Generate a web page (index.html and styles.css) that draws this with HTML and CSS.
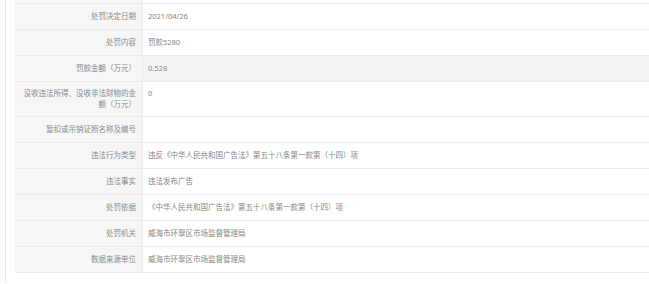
FILE: index.html
```html
<!DOCTYPE html>
<html lang="zh-CN">
<head>
<meta charset="utf-8">
<title>行政处罚信息</title>
<link rel="stylesheet" href="styles.css">
</head>
<body>
<div class="panel">
  <table class="info">
    <tbody>
      <tr class="lead"><th></th><td></td></tr>
      <tr><th>处罚决定日期</th><td>2021/04/26</td></tr>
      <tr><th>处罚内容</th><td>罚款5280</td></tr>
      <tr class="hover"><th>罚款金额（万元）</th><td>0.528</td></tr>
      <tr class="tall"><th>没收违法所得、没收非法财物的金额（万元）</th><td class="top">0</td></tr>
      <tr><th>暂扣或吊销证照名称及编号</th><td></td></tr>
      <tr><th>违法行为类型</th><td>违反《中华人民共和国广告法》第五十八条第一款第（十四）项</td></tr>
      <tr><th>违法事实</th><td>违法发布广告</td></tr>
      <tr><th>处罚依据</th><td>《中华人民共和国广告法》第五十八条第一款第（十四）项</td></tr>
      <tr><th>处罚机关</th><td>威海市环翠区市场监督管理局</td></tr>
      <tr><th>数据来源单位</th><td>威海市环翠区市场监督管理局</td></tr>
    </tbody>
  </table>
</div>
</body>
</html>
```

FILE: styles.css
```css
html, body {
  margin: 0;
  padding: 0;
  background: #ffffff;
  overflow: hidden;
}

body {
  font-family: "Noto Sans", "Noto Sans CJK SC", sans-serif;
  font-size: 7.5px;
  color: #888888;
}

.panel {
  box-sizing: border-box;
  margin: 0 0 0 5px;
  height: 283px;
  padding: 0 0 0 9px;
  border-left: 1px solid #e8e8e8;
  background: #ffffff;
}

.info {
  width: 100%;
  border-collapse: collapse;
  table-layout: fixed;
}

.info th,
.info td {
  border-top: 1px solid #ebebeb;
  border-bottom: 1px solid #ebebeb;
  line-height: 11px;
  padding: 7px 6px 7px 5px;
  vertical-align: middle;
  font-weight: normal;
}

.info th {
  width: 116px;
  padding-right: 6px;
  text-align: right;
  background: #f6f6f6;
  border-right: 1px solid #ececec;
  color: #8a8a8a;
}

.info td {
  text-align: left;
  background: #ffffff;
  color: #858585;
}

.info tr.lead th,
.info tr.lead td {
  border-top: none;
  padding-top: 0;
  padding-bottom: 0;
  height: 3px;
}

.info tr.hover td {
  background: #f3f3f3;
}

.info tr.tall th {
  padding-top: 6px;
  padding-bottom: 6px;
}

.info td.top {
  vertical-align: top;
  padding-top: 6px;
}
```
